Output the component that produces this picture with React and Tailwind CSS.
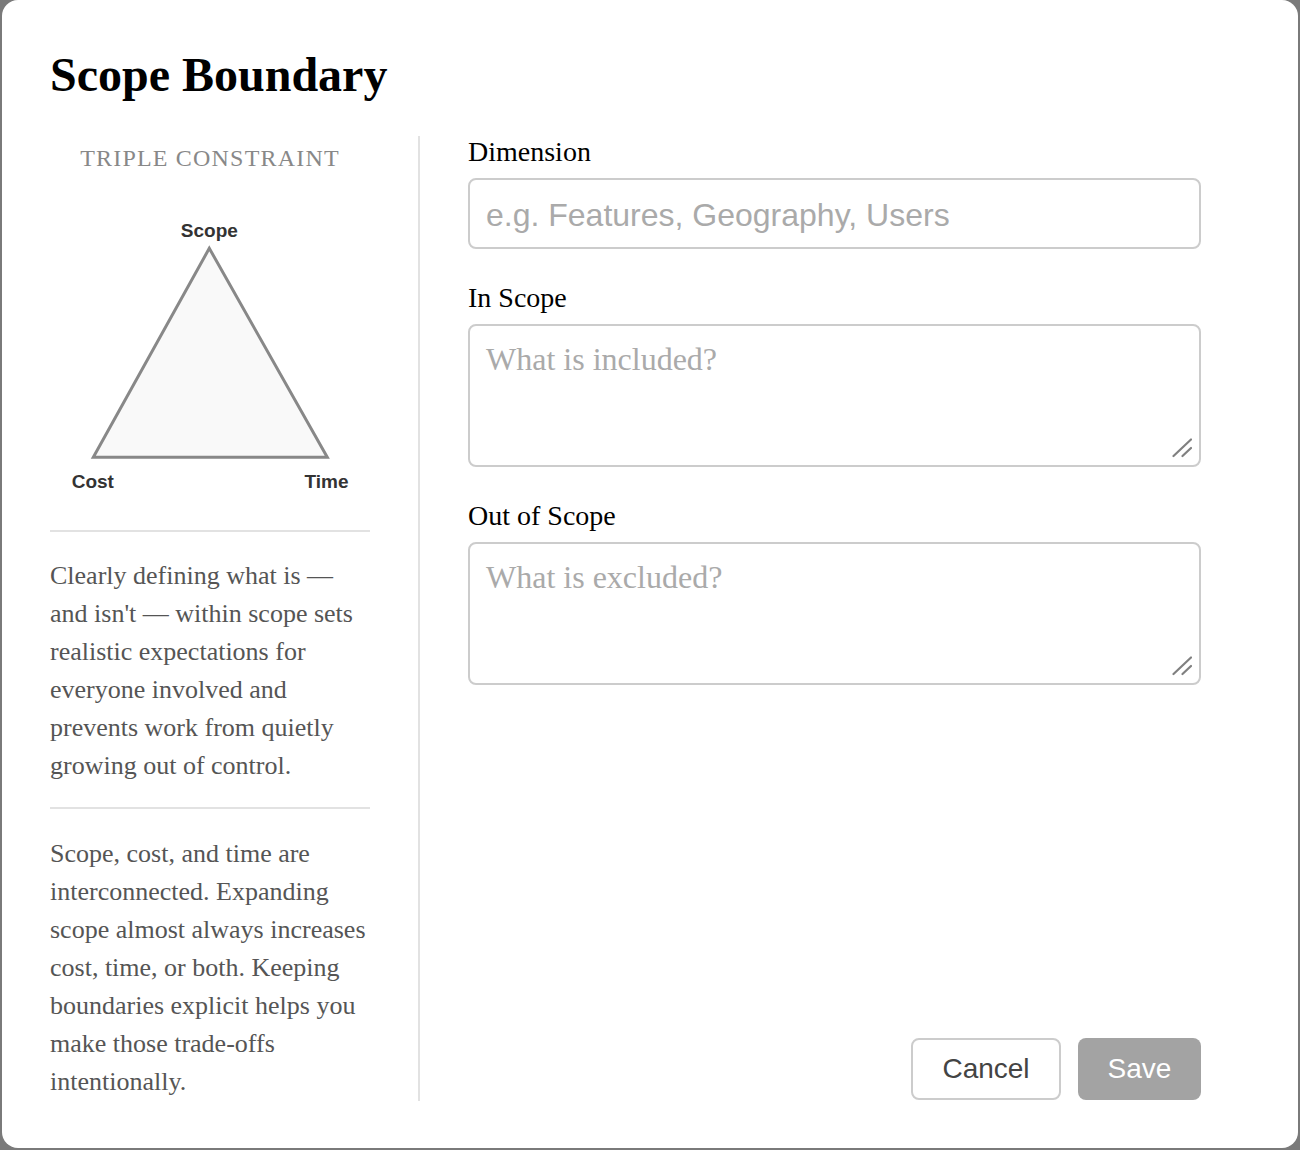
const serif = { fontFamily: '"Liberation Serif", "Times New Roman", serif' };
const sans = { fontFamily: '"Liberation Sans", Arial, sans-serif' };

function Triangle() {
  return (
    <svg width="320" height="300" viewBox="0 0 320 300" className="block mt-[24px]">
      <polygon
        points="159.3,48.3 43.3,257.3 277.3,257.3"
        fill="#f9f9f9"
        stroke="#888888"
        strokeWidth="3"
        strokeLinejoin="miter"
      />
      <g
        fontFamily='"Liberation Sans", Arial, sans-serif'
        fontWeight="700"
        fontSize="19"
        fill="#333333"
        textAnchor="middle"
      >
        <text x="159.3" y="37">Scope</text>
        <text x="42.8" y="288">Cost</text>
        <text x="276.5" y="288">Time</text>
      </g>
    </svg>
  );
}

function Grip() {
  return (
    <svg
      width="20"
      height="20"
      viewBox="0 0 20 20"
      className="absolute right-[9px] bottom-[9px] pointer-events-none"
    >
      <g stroke="#808080" strokeWidth="2.2" strokeLinecap="round">
        <line x1="1.5" y1="18" x2="19" y2="1.5" />
        <line x1="10.5" y1="18" x2="19" y2="10" />
      </g>
    </svg>
  );
}

function Field({ label, children }) {
  return (
    <div className="mb-[33px]">
      <label className="block text-[28px] leading-[32px] text-black mb-[10px]" style={serif}>
        {label}
      </label>
      {children}
    </div>
  );
}

function Area({ placeholder }) {
  return (
    <div className="relative">
      <textarea
        placeholder={placeholder}
        className="block w-full h-[143px] resize-none border-2 border-[#cccccc] rounded-[8px] px-[16px] pt-[9px] pb-[16px] text-[32px] outline-none placeholder:text-[#aaaaaa]"
        style={serif}
      />
      <Grip />
    </div>
  );
}

export default function App() {
  return (
    <div className="w-[1300px] h-[1150px] bg-[#7a7a7a] px-[2px] pb-[2px]">
      <div className="h-[1148px] bg-white rounded-2xl px-[48px] pt-[47px]" style={serif}>
        <h1 className="text-[48px] leading-[55px] font-bold text-black mb-[34px]">Scope Boundary</h1>

        <div className="flex">
          <div className="w-[320px] shrink-0">
            <div className="mt-[4px] text-center text-[24px] text-[#888] uppercase tracking-[1.2px]">
              Triple Constraint
            </div>
            <Triangle />
            <div className="mt-[30px] h-[2px] bg-[#e2e2e2]" />
            <p className="mt-[25px] text-[26px] leading-[38px] text-[#555]">
              Clearly defining what is — and isn't — within scope sets realistic expectations for
              everyone involved and prevents work from quietly growing out of control.
            </p>
            <div className="mt-[22px] h-[2px] bg-[#e2e2e2]" />
            <p className="mt-[26px] text-[26px] leading-[38px] text-[#555]">
              Scope, cost, and time are interconnected. Expanding scope almost always increases
              cost, time, or both. Keeping boundaries explicit helps you make those trade-offs
              intentionally.
            </p>
          </div>

          <div className="w-[2px] bg-[#e2e2e2] mx-[48px]" />

          <div className="w-[733px] flex flex-col">
            <Field label="Dimension">
              <input
                type="text"
                placeholder="e.g. Features, Geography, Users"
                className="block w-full h-[71px] border-2 border-[#cccccc] rounded-[8px] px-[16px] pt-[3px] text-[32px] outline-none placeholder:text-[#aaaaaa]"
                style={sans}
              />
            </Field>
            <Field label="In Scope">
              <Area placeholder="What is included?" />
            </Field>
            <Field label="Out of Scope">
              <Area placeholder="What is excluded?" />
            </Field>

            <div className="mt-auto mb-[1px] flex justify-end gap-[17px]" style={sans}>
              <button
                type="button"
                className="h-[62px] w-[150px] border-2 border-[#cccccc] rounded-[8px] bg-white text-[28px] text-[#444]"
              >
                Cancel
              </button>
              <button
                type="button"
                className="h-[62px] w-[123px] rounded-[8px] bg-[#a3a3a3] text-[28px] text-white"
              >
                Save
              </button>
            </div>
          </div>
        </div>
      </div>
    </div>
  );
}
